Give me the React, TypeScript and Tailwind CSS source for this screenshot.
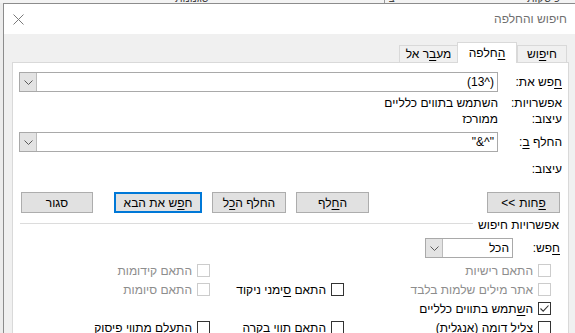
import React from "react";

const FONT = { fontFamily: '"Liberation Sans", Arial, sans-serif' };

function Chevron() {
  return (
    <svg width="9" height="5" viewBox="0 0 9 5">
      <path d="M0.5 0.5 L4.5 4.5 L8.5 0.5" fill="none" stroke="#5a5a5a" strokeWidth="1" />
    </svg>
  );
}

function Combo({ value, className }: { value: string; className?: string }) {
  return (
    <div className={"flex h-[20px] border border-[#a9a9a9] bg-white " + (className ?? "")}>
      <div className="flex-1 flex items-center pr-[3px] text-black whitespace-pre">{value}</div>
      <div className="w-[17px] bg-[#e3e3e3] border-r border-[#bcbcbc] flex items-center justify-center">
        <Chevron />
      </div>
    </div>
  );
}

function U({ children }: { children: React.ReactNode }) {
  return <span className="underline underline-offset-[2px] decoration-1">{children}</span>;
}

function Check({
  label,
  disabled,
  checked,
}: {
  label: React.ReactNode;
  disabled?: boolean;
  checked?: boolean;
}) {
  return (
    <div className="flex items-center gap-[5px] h-[19px]">
      <div
        className={
          "w-[13px] h-[13px] border bg-white flex items-center justify-center shrink-0 " +
          (disabled ? "border-[#cccccc]" : "border-[#333333]")
        }
      >
        {checked && (
          <svg width="11" height="11" viewBox="0 0 11 11">
            <path d="M1.5 5.5 L4.2 8.2 L9.5 2.5" fill="none" stroke="#333" strokeWidth="1.1" />
          </svg>
        )}
      </div>
      <span className={"whitespace-nowrap " + (disabled ? "text-[#8d8d8d]" : "text-black")}>{label}</span>
    </div>
  );
}

function Btn({
  children,
  w,
  primary,
}: {
  children: React.ReactNode;
  w: string;
  primary?: boolean;
}) {
  return (
    <div
      className={
        "h-[21px] flex items-center justify-center bg-[#e1e1e1] " +
        w +
        " " +
        (primary ? "border-2 border-[#0078d7]" : "border border-[#adadad]")
      }
    >
      {children}
    </div>
  );
}

export default function App() {
  return (
    <div className="relative w-[575px] h-[333px] overflow-hidden bg-[#ececec] text-[12px] leading-[16px]" style={FONT}>
      {/* application behind the dialog */}
      <div className="absolute top-0 left-0 w-full h-[3px] overflow-hidden bg-[#f3f3f3] text-[11px] text-[#444]" dir="rtl">
        <span className="absolute top-[-10px] left-[175px]">סגנונות</span>
        <span className="absolute top-[-10px] left-[386px]">צי</span>
        <span className="absolute top-[-3px] left-[384px] w-px h-[6px] bg-[#999]" />
        <span className="absolute top-[-10px] left-[527px]">כ סקות</span>
      </div>

      <div className="pt-[3px] pl-[3px] h-full">
        <div dir="rtl" className="h-full flex flex-col border-l border-t border-[#8c8c8c] bg-[#f0f0f0]">
          {/* title bar */}
          <div className="h-[30px] bg-white flex items-center justify-between pr-[8px] pl-[9px] shrink-0">
            <span className="text-[#6f6f6f] text-[12px]">חיפוש והחלפה</span>
            <svg width="11" height="11" viewBox="0 0 11 11" className="mt-[1px]">
              <path d="M0.5 0.5 L10.5 10.5 M10.5 0.5 L0.5 10.5" stroke="#7a7a7a" strokeWidth="1" />
            </svg>
          </div>

          {/* body */}
          <div className="flex-1 flex flex-col pt-[8px] pr-[6px] pl-[8px]">
            {/* tabs */}
            <div className="flex items-end h-[20px] pr-[2px]">
              <div className="w-[50px] h-[17px] border-t border-l border-r border-[#d9d9d9] flex items-center justify-center">
                <span>
                  חי<U>פ</U>וש
                </span>
              </div>
              <div className="relative z-10 w-[60px] h-[21px] mb-[-1px] bg-white border-t border-l border-r border-[#d9d9d9] flex items-center justify-center pb-[1px]">
                <span>
                  <U>ה</U>חלפה
                </span>
              </div>
              <div className="w-[58px] h-[17px] border-t border-l border-[#d9d9d9] flex items-center justify-center">
                <span>
                  מע<U>ב</U>ר אל
                </span>
              </div>
            </div>

            {/* panel */}
            <div className="flex-1 border border-[#d9d9d9] bg-white pt-[9px] pr-[6px] pl-[6px] flex flex-col">
              <div className="flex h-[20px]">
                <div className="w-[64px] flex items-center">
                  <span>
                    <U>ח</U>פש את:
                  </span>
                </div>
                <Combo className="flex-1" value="(^13)" />
              </div>

              <div className="flex h-[16px] mt-[3px] items-center">
                <div className="w-[64px]">אפשרויות:</div>
                <div>השתמש בתווים כלליים</div>
              </div>
              <div className="flex h-[16px] items-center">
                <div className="w-[64px]">עיצוב:</div>
                <div>ממורכז</div>
              </div>

              <div className="flex h-[20px] mt-[5px]">
                <div className="w-[64px] flex items-center">
                  <span>
                    החלף <U>ב</U>:
                  </span>
                </div>
                <Combo className="flex-1" value={'"^&"'} />
              </div>

              <div className="flex h-[16px] mt-[9px] items-center">
                <div className="w-[64px]">עיצוב:</div>
              </div>

              {/* buttons */}
              <div className="flex mt-[15px] px-[2px] justify-between">
                <Btn w="w-[73px]">
                  <span dir="ltr" className="flex gap-[4px]">
                    <span>&lt;&lt;</span>
                    <span dir="rtl">
                      <U>פ</U>חות
                    </span>
                  </span>
                </Btn>
                <div className="flex gap-[10px]">
                  <Btn w="w-[73px]">
                    <span>
                      ה<U>ח</U>לף
                    </span>
                  </Btn>
                  <Btn w="w-[74px]">
                    <span>
                      החלף ה<U>כ</U>ל
                    </span>
                  </Btn>
                  <Btn w="w-[88px]" primary>
                    <span>
                      ח<U>פ</U>ש את הבא
                    </span>
                  </Btn>
                  <div className="w-px" />
                  <Btn w="w-[72px]">סגור</Btn>
                </div>
              </div>

              {/* search options group */}
              <div className="flex h-[16px] mt-[4px] items-center pr-[3px] pl-[1px] gap-[5px]">
                <span className="whitespace-nowrap">אפשרויות חיפוש</span>
                <div className="flex-1 h-px bg-[#dcdcdc] mb-[3px]" />
              </div>

              <div className="flex h-[20px] mt-[5px] pr-[2px]">
                <div className="w-[47px] flex items-center">
                  <span>
                    <U>ח</U>פש:
                  </span>
                </div>
                <Combo className="w-[88px]" value="הכל" />
              </div>

              <div className="mt-[3px] pr-[11px] grid grid-cols-[207px_134px_1fr]">
                <Check label="התאם רישיות" disabled />
                <div />
                <Check label="התאם קידומות" disabled />

                <Check label="אתר מילים שלמות בלבד" disabled />
                <Check
                  label={
                    <span>
                      התאם <U>ס</U>ימני ניקוד
                    </span>
                  }
                />
                <Check label="התאם סיומות" disabled />

                <Check
                  checked
                  label={
                    <span>
                      ה<U>ש</U>תמש בתווים כלליים
                    </span>
                  }
                />
                <div />
                <div />

                <Check label="צליל דומה (אנגלית)" />
                <Check label="התאם תווי בקרה" />
                <Check label="התעלם מתווי פיסוק" />
              </div>
            </div>
          </div>
        </div>
      </div>
    </div>
  );
}
